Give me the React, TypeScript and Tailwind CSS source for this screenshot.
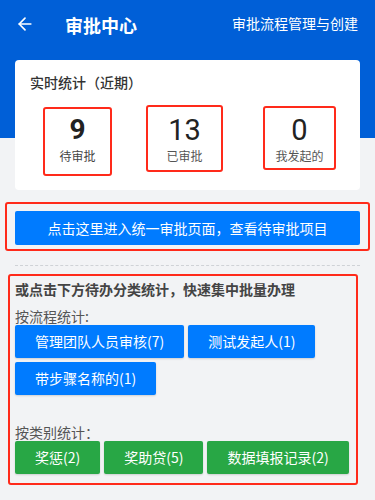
import { ArrowLeft } from "lucide-react";

const flowItems = ["管理团队人员审核(7)", "测试发起人(1)", "带步骤名称的(1)"];
const typeItems = ["奖惩(2)", "奖助贷(5)", "数据填报记录(2)"];

export default function App() {
  return (
    <div
      className="w-[375px] h-[500px] overflow-hidden bg-[#f2f3f5]"
      style={{ fontFamily: "'Noto Sans CJK SC', 'Noto Sans', sans-serif" }}
    >
      {/* Header */}
      <div className="bg-[#005fd7] h-[138px]">
        <div className="h-[50px] flex items-center pl-[15px] pr-[17px] text-white">
          <ArrowLeft size={20} strokeWidth={2} className="mt-[-2px]" />
          <span className="ml-[30px] text-[18px] font-bold leading-none">审批中心</span>
          <span className="ml-auto text-[14px] leading-none mt-[-4px]">审批流程管理与创建</span>
        </div>
      </div>

      {/* Stats card */}
      <div className="mx-[15px] -mt-[78px] h-[130px] bg-white rounded-[4px] px-[15px] pt-[12px]">
        <div className="text-[14px] leading-[20px] font-medium text-[#333]">实时统计（近期）</div>
        <div className="flex items-start mt-[15px]">
          <div className="ml-[13px] w-[69px] h-[69px] border-2 border-[#ff2a1a] rounded-[3px] flex flex-col items-center pt-[6px]">
            <div className="font-['Roboto',sans-serif] text-[28px] leading-[30px] font-bold text-[#222]">9</div>
            <div className="mt-[4px] text-[12px] leading-[14px] text-[#444]">待审批</div>
          </div>
          <div className="ml-[34px] -mt-[2px] w-[77px] h-[67px] border-2 border-[#ff2a1a] rounded-[3px] flex flex-col items-center pt-[8px]">
            <div className="font-['Roboto',sans-serif] text-[29px] leading-[30px] font-normal text-[#222]">13</div>
            <div className="mt-[4px] text-[12px] leading-[14px] text-[#555]">已审批</div>
          </div>
          <div className="ml-[40px] -mt-[1px] w-[73px] h-[64px] border-2 border-[#ff2a1a] rounded-[3px] flex flex-col items-center pt-[7px]">
            <div className="font-['Roboto',sans-serif] text-[29px] leading-[30px] font-normal text-[#222]">0</div>
            <div className="mt-[4px] text-[12px] leading-[14px] text-[#555]">我发起的</div>
          </div>
        </div>
      </div>

      {/* Entry button */}
      <div className="mx-[5px] mt-[12px] border-2 border-[#ff2a1a] rounded-[3px] px-[8px] pt-[7px] pb-[4px]">
        <button className="w-full h-[34px] bg-[#007bff] text-white text-[14px] rounded-[2px]">
          点击这里进入统一审批页面，查看待审批项目
        </button>
      </div>

      <div className="mx-[15px] mt-[14px] border-t border-dashed border-[#cfd2d6]" />

      {/* Category stats */}
      <div className="ml-[8px] w-[350px] mt-[8px] border-2 border-[#ff2a1a] rounded-[3px] pl-[5px] pt-[3px] pb-[9px]">
        <div className="text-[14px] leading-[20px] font-bold text-[#444]">或点击下方待办分类统计，快速集中批量办理</div>
        <div className="mt-[8px] text-[14px] leading-[18px] text-[#555]">按流程统计:</div>
        <div className="flex flex-wrap gap-[4px] pr-[30px]">
          {flowItems.map((t) => (
            <button
              key={t}
              className="h-[33px] px-[20px] bg-[#007bff] text-white text-[14px] rounded-[2px] shadow-[0_1px_2px_rgba(0,0,0,0.15)]"
            >
              {t}
            </button>
          ))}
        </div>
        <div className="mt-[28px] text-[14px] leading-[18px] text-[#555]">按类别统计：</div>
        <div className="flex flex-wrap gap-[4px]">
          {typeItems.map((t) => (
            <button
              key={t}
              className="h-[33px] px-[20px] bg-[#28a745] text-white text-[14px] rounded-[2px] shadow-[0_1px_2px_rgba(0,0,0,0.15)]"
            >
              {t}
            </button>
          ))}
        </div>
      </div>
    </div>
  );
}
